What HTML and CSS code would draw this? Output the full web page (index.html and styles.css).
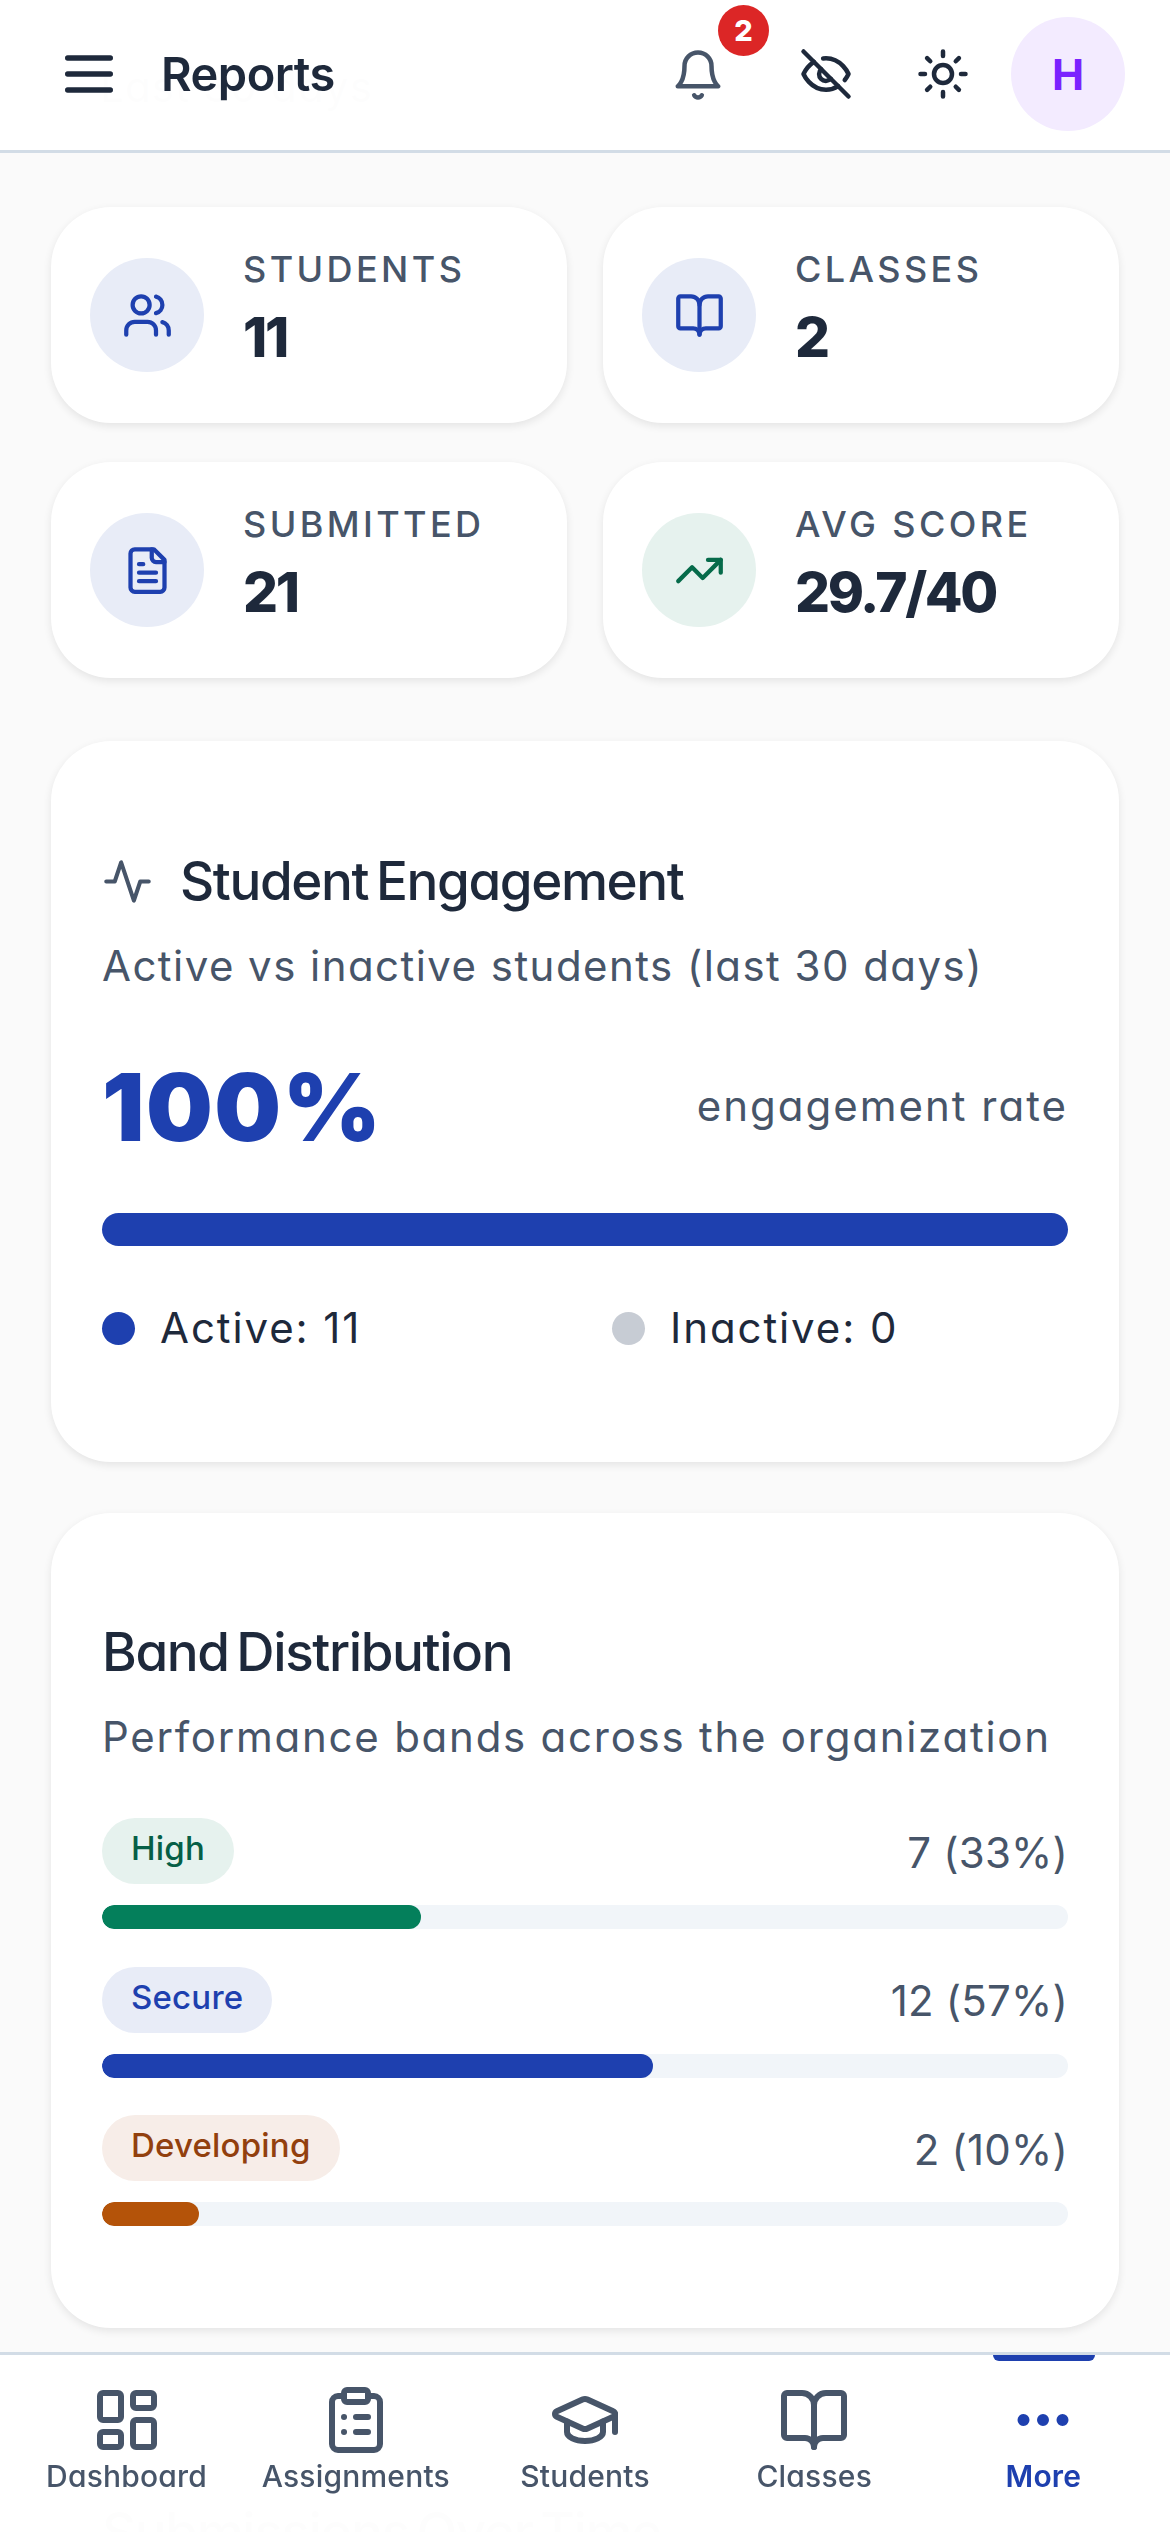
FILE: index.html
```html
<!DOCTYPE html>
<html lang="en">

<head>
    <meta charset="UTF-8">
    <meta name="viewport" content="width=device-width, initial-scale=1.0">
    <title>Reports</title>
    <link rel="stylesheet" href="styles.css">
</head>

<body>
    <header class="topbar">
        <svg class="icon menu-icon" viewBox="0 0 24 24"><path d="M4 6h16M4 12h16M4 18h16" /></svg>
        <h1 class="page-title">Reports</h1>
        <div class="topbar-actions">
            <div class="bell">
                <svg class="icon bell-icon" viewBox="0 0 24 24"><path d="M6 8a6 6 0 0 1 12 0c0 7 3 9 3 9H3s3-2 3-9" /><path d="M10.3 21a1.94 1.94 0 0 0 3.4 0" /></svg>
                <span class="badge">2</span>
            </div>
            <svg class="icon action-icon" viewBox="0 0 24 24"><path d="M9.88 9.88a3 3 0 1 0 4.24 4.24" /><path d="M10.73 5.08A10.43 10.43 0 0 1 12 5c7 0 10 7 10 7a13.16 13.16 0 0 1-1.67 2.68" /><path d="M6.61 6.61A13.526 13.526 0 0 0 2 12s3 7 10 7a9.74 9.74 0 0 0 5.39-1.61" /><path d="M2 2l20 20" /></svg>
            <svg class="icon action-icon" viewBox="0 0 24 24"><circle cx="12" cy="12" r="4" /><path d="M12 2v2M12 20v2M4.93 4.93l1.41 1.41M17.66 17.66l1.41 1.41M2 12h2M20 12h2M6.34 17.66l-1.41 1.41M19.07 4.93l-1.41 1.41" /></svg>
            <div class="avatar">H</div>
        </div>
    </header>

    <main class="content">
        <div class="range-select">Last 30 days</div>

        <section class="stats">
            <div class="stat-card">
                <div class="stat-icon blue">
                    <svg class="icon" viewBox="0 0 24 24"><path d="M16 21v-2a4 4 0 0 0-4-4H6a4 4 0 0 0-4 4v2" /><circle cx="9" cy="7" r="4" /><path d="M22 21v-2a4 4 0 0 0-3-3.87" /><path d="M16 3.13a4 4 0 0 1 0 7.75" /></svg>
                </div>
                <div>
                    <div class="stat-label">STUDENTS</div>
                    <div class="stat-value">11</div>
                </div>
            </div>
            <div class="stat-card">
                <div class="stat-icon blue">
                    <svg class="icon" viewBox="0 0 24 24"><path d="M12 7v14" /><path d="M3 18a1 1 0 0 1-1-1V4a1 1 0 0 1 1-1h5a4 4 0 0 1 4 4 4 4 0 0 1 4-4h5a1 1 0 0 1 1 1v13a1 1 0 0 1-1 1h-6a3 3 0 0 0-3 3 3 3 0 0 0-3-3z" /></svg>
                </div>
                <div>
                    <div class="stat-label">CLASSES</div>
                    <div class="stat-value">2</div>
                </div>
            </div>
            <div class="stat-card">
                <div class="stat-icon blue">
                    <svg class="icon" viewBox="0 0 24 24"><path d="M15 2H6a2 2 0 0 0-2 2v16a2 2 0 0 0 2 2h12a2 2 0 0 0 2-2V7z" /><path d="M14 2v4a2 2 0 0 0 2 2h4" /><path d="M10 9H8M16 13H8M16 17H8" /></svg>
                </div>
                <div>
                    <div class="stat-label">SUBMITTED</div>
                    <div class="stat-value">21</div>
                </div>
            </div>
            <div class="stat-card">
                <div class="stat-icon green">
                    <svg class="icon" viewBox="0 0 24 24"><path d="M22 7l-8.5 8.5-5-5L2 17" /><path d="M16 7h6v6" /></svg>
                </div>
                <div>
                    <div class="stat-label">AVG SCORE</div>
                    <div class="stat-value">29.7/40</div>
                </div>
            </div>
        </section>

        <section class="card engagement">
            <h2 class="card-title">
                <svg class="icon title-icon" viewBox="0 0 24 24"><path d="M22 12h-4l-3 9L9 3l-3 9H2" /></svg>
                Student Engagement
            </h2>
            <p class="card-sub">Active vs inactive students (last 30 days)</p>
            <div class="rate-row">
                <span class="rate">100%</span>
                <span class="rate-label">engagement rate</span>
            </div>
            <div class="rate-bar"></div>
            <div class="legend">
                <div class="legend-item"><span class="dot dot-active"></span>Active: 11</div>
                <div class="legend-item"><span class="dot dot-inactive"></span>Inactive: 0</div>
            </div>
        </section>

        <section class="card bands">
            <h2 class="card-title">Band Distribution</h2>
            <p class="card-sub">Performance bands across the organization</p>
            <div class="band-list">
                <div class="band">
                    <div class="band-head">
                        <span class="pill pill-high">High</span>
                        <span class="band-count">7 (33%)</span>
                    </div>
                    <div class="track"><div class="fill fill-high" style="width: 33%"></div></div>
                </div>
                <div class="band">
                    <div class="band-head">
                        <span class="pill pill-secure">Secure</span>
                        <span class="band-count">12 (57%)</span>
                    </div>
                    <div class="track"><div class="fill fill-secure" style="width: 57%"></div></div>
                </div>
                <div class="band">
                    <div class="band-head">
                        <span class="pill pill-developing">Developing</span>
                        <span class="band-count">2 (10%)</span>
                    </div>
                    <div class="track"><div class="fill fill-developing" style="width: 10%"></div></div>
                </div>
            </div>
        </section>

        <section class="card submissions">
            <h2 class="card-title">Submissions Over Time</h2>
        </section>
    </main>

    <nav class="bottom-nav">
        <div class="nav-item">
            <svg class="icon nav-icon" viewBox="0 0 24 24"><rect x="3" y="3" width="7" height="9" rx="1" /><rect x="14" y="3" width="7" height="5" rx="1" /><rect x="14" y="12" width="7" height="9" rx="1" /><rect x="3" y="16" width="7" height="5" rx="1" /></svg>
            <span>Dashboard</span>
        </div>
        <div class="nav-item">
            <svg class="icon nav-icon" viewBox="0 0 24 24"><rect x="8" y="2" width="8" height="4" rx="1" /><path d="M16 4h2a2 2 0 0 1 2 2v14a2 2 0 0 1-2 2H6a2 2 0 0 1-2-2V6a2 2 0 0 1 2-2h2" /><path d="M12 11h4M12 16h4M8 11h.01M8 16h.01" /></svg>
            <span>Assignments</span>
        </div>
        <div class="nav-item">
            <svg class="icon nav-icon" viewBox="0 0 24 24"><path d="M21.42 10.922a1 1 0 0 0-.019-1.838L12.83 5.18a2 2 0 0 0-1.66 0L2.6 9.08a1 1 0 0 0 0 1.832l8.57 3.908a2 2 0 0 0 1.66 0z" /><path d="M22 10v6" /><path d="M6 12.5V16a6 3 0 0 0 12 0v-3.5" /></svg>
            <span>Students</span>
        </div>
        <div class="nav-item">
            <svg class="icon nav-icon" viewBox="0 0 24 24"><path d="M12 7v14" /><path d="M3 18a1 1 0 0 1-1-1V4a1 1 0 0 1 1-1h5a4 4 0 0 1 4 4 4 4 0 0 1 4-4h5a1 1 0 0 1 1 1v13a1 1 0 0 1-1 1h-6a3 3 0 0 0-3 3 3 3 0 0 0-3-3z" /></svg>
            <span>Classes</span>
        </div>
        <div class="nav-item active">
            <svg class="icon nav-icon" viewBox="0 0 24 24"><circle cx="5.5" cy="12" r="1" /><circle cx="12" cy="12" r="1" /><circle cx="18.5" cy="12" r="1" /></svg>
            <span>More</span>
        </div>
    </nav>
</body>

</html>
```

FILE: styles.css
```css
* {
    margin: 0;
    padding: 0;
    box-sizing: border-box;
}

html,
body {
    height: 100vh;
    overflow: hidden;
}

body {
    background: #fafafa;
    color: #1e293b;
    font-family: Inter, "Noto Sans", sans-serif;
    font-feature-settings: "cv11";
}

.icon {
    fill: none;
    stroke: currentColor;
    stroke-width: 2;
    stroke-linecap: round;
    stroke-linejoin: round;
    flex-shrink: 0;
}

/* top bar */
.topbar {
    position: fixed;
    top: 0;
    left: 0;
    right: 0;
    z-index: 2;
    height: 153px;
    display: flex;
    align-items: center;
    padding: 0 45px 3px 57px;
    background: rgba(255, 255, 255, 0.992);
    border-bottom: 3px solid #d2dce6;
}

.menu-icon {
    width: 64px;
    height: 64px;
    color: #1e293b;
}

.page-title {
    margin-left: 40px;
    font-size: 47px;
    font-weight: 600;
    letter-spacing: -0.5px;
}

.topbar-actions {
    margin-left: auto;
    display: flex;
    align-items: center;
}

.bell {
    position: relative;
    width: 54px;
    height: 54px;
    margin-right: 74px;
    margin-top: 3px;
}

.bell-icon {
    width: 54px;
    height: 54px;
    color: #475569;
}

.badge {
    position: absolute;
    top: -43px;
    left: 47px;
    width: 51px;
    height: 51px;
    border-radius: 50%;
    background: #dc2626;
    color: #fff;
    font-size: 29px;
    font-weight: 800;
    display: flex;
    align-items: center;
    justify-content: center;
}

.action-icon {
    width: 54px;
    height: 54px;
    margin-right: 63px;
    color: #1e293b;
}

.action-icon + .action-icon {
    margin-right: 41px;
}

.avatar {
    width: 114px;
    height: 114px;
    border-radius: 50%;
    background: #f3ebff;
    color: #7a22ff;
    font-size: 43px;
    font-weight: 700;
    display: flex;
    align-items: center;
    justify-content: center;
}

/* page content */
.content {
    padding: 27px 51px 0;
}

.range-select {
    width: 422px;
    height: 120px;
    padding: 0 46px;
    font-size: 42px;
    line-height: 114px;
    letter-spacing: 1.2px;
    border: 3px solid #e2e8f0;
    border-radius: 30px;
    margin-bottom: 60px;
}

.stats {
    display: grid;
    grid-template-columns: 516px 516px;
    column-gap: 36px;
    row-gap: 39px;
}

.stat-card {
    height: 216px;
    display: flex;
    align-items: center;
    gap: 39px;
    padding: 0 39px;
    background: #fff;
    border-radius: 60px;
    box-shadow: 0 3px 9px rgba(0, 0, 0, 0.09);
}

.stat-icon {
    width: 114px;
    height: 114px;
    border-radius: 50%;
    display: flex;
    align-items: center;
    justify-content: center;
}

.stat-icon .icon {
    width: 51px;
    height: 51px;
}

.stat-icon.blue {
    background: #e8ecf7;
    color: #1e40af;
}

.stat-icon.green {
    background: #e6f2ee;
    color: #066b4a;
}

.stat-label {
    font-size: 36px;
    line-height: 44px;
    font-weight: 500;
    letter-spacing: 3.4px;
    color: #475569;
}

.stat-value {
    font-size: 55px;
    line-height: 93px;
    font-weight: 800;
    letter-spacing: -2.4px;
}

.card {
    margin-top: 63px;
    padding: 110px 51px 104px;
    background: #fff;
    border-radius: 60px;
    box-shadow: 0 3px 9px rgba(0, 0, 0, 0.09);
}

.bands {
    margin-top: 51px;
    padding-top: 109px;
    padding-bottom: 102px;
}

.submissions {
    margin-top: 64px;
}

.card-title {
    display: flex;
    align-items: center;
    font-size: 53px;
    line-height: 60px;
    font-weight: 500;
    letter-spacing: -1.4px;
    word-spacing: -5px;
}

.title-icon {
    width: 51px;
    height: 51px;
    margin-right: 27px;
    color: #475569;
    stroke-width: 1.9;
}

.card-sub {
    margin-top: 25px;
    font-size: 42px;
    line-height: 60px;
    letter-spacing: 1.45px;
    color: #475569;
}

.bands .card-sub {
    letter-spacing: 1.75px;
}

.rate-row {
    margin-top: 56px;
    display: flex;
    align-items: center;
    justify-content: space-between;
}

.rate {
    font-size: 94px;
    line-height: 110px;
    font-weight: 900;
    letter-spacing: 1.5px;
    color: #1e40af;
}

.rate-label {
    font-size: 42px;
    line-height: 54px;
    letter-spacing: 2px;
    color: #475569;
    margin-bottom: 3px;
}

.rate-bar {
    margin-top: 51px;
    height: 33px;
    border-radius: 17px;
    background: #1e40af;
}

.legend {
    margin-top: 52px;
    display: grid;
    grid-template-columns: 1fr 1fr;
    column-gap: 54px;
}

.legend-item {
    display: flex;
    align-items: center;
    gap: 25px;
    font-size: 42px;
    line-height: 60px;
    letter-spacing: 1.9px;
}

.dot {
    width: 33px;
    height: 33px;
    border-radius: 50%;
}

.dot-active {
    background: #1e40af;
}

.dot-inactive {
    background: #c7ccd4;
}

.band-list {
    margin-top: 51px;
    display: flex;
    flex-direction: column;
    gap: 37.5px;
}

.band-head {
    display: flex;
    align-items: center;
    justify-content: space-between;
    margin-bottom: 21px;
}

.band-count {
    font-size: 42px;
    letter-spacing: 0.2px;
    margin-top: 2px;
    color: #475569;
}

.pill {
    height: 66px;
    padding: 0 29px;
    border-radius: 33px;
    font-size: 33px;
    font-weight: 500;
    line-height: 60px;
    letter-spacing: 0.2px;
}

.pill-high {
    background: #e6f2ee;
    color: #065f46;
}

.pill-secure {
    background: #e8ecf7;
    color: #1e40af;
}

.pill-developing {
    background: #f7ede8;
    color: #92400e;
}

.track {
    height: 24px;
    border-radius: 12px;
    background: #f1f5f9;
    overflow: hidden;
}

.fill {
    height: 100%;
    border-radius: 12px;
}

.fill-high {
    background: #047f5b;
}

.fill-secure {
    background: #1e40af;
}

.fill-developing {
    background: #b45309;
}

/* bottom navigation */
.bottom-nav {
    position: fixed;
    left: 0;
    right: 0;
    bottom: 0;
    z-index: 2;
    height: 180px;
    display: grid;
    grid-template-columns: repeat(5, 1fr);
    padding: 0 12px;
    background: rgba(255, 255, 255, 0.992);
    border-top: 3px solid #d2dce6;
}

.nav-item {
    position: relative;
    display: flex;
    flex-direction: column;
    align-items: center;
    padding-top: 29px;
    color: #475569;
    font-size: 30px;
    font-weight: 500;
    line-height: 40px;
    letter-spacing: 0.2px;
}

.nav-icon {
    width: 72px;
    height: 72px;
}

.nav-item.active {
    color: #1e40af;
    font-weight: 600;
}

.nav-item.active .nav-icon {
    fill: currentColor;
}

.nav-item.active::before {
    content: "";
    position: absolute;
    top: 0;
    left: 64px;
    width: 102px;
    height: 6px;
    background: #1e40af;
    border-radius: 0 0 6px 6px;
}
```
